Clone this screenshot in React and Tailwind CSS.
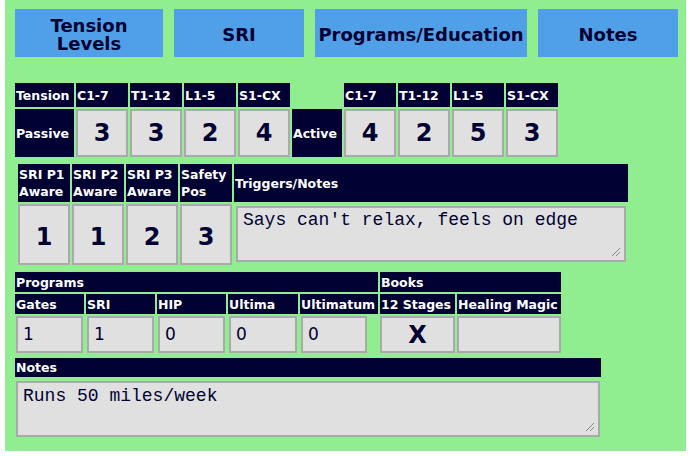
import React from 'react';

const navy = 'bg-[#000033]';

const Head = ({ className = '', children }) => (
  <div className={`${navy} text-white font-bold text-[12.5px] leading-[17px] px-[1px] flex items-center whitespace-nowrap overflow-hidden ${className}`}>
    {children}
  </div>
);

const Val = ({ className = '', children }) => (
  <div className={`bg-[#e0e0e0] border-2 border-[#aaaaaa] text-[#000033] font-bold text-[24px] flex items-center justify-center ${className}`}>
    {children}
  </div>
);

const Field = ({ className = '', children }) => (
  <div className={`bg-[#e0e0e0] border-2 border-[#aaaaaa] text-[#000033] text-[17px] px-[5px] flex items-center ${className}`}>
    {children}
  </div>
);

const Grip = () => (
  <svg className="absolute right-[3px] bottom-[3px]" width="10" height="10" viewBox="0 0 10 10">
    <path d="M9 1L1 9M9 5L5 9" stroke="#888" strokeWidth="1" />
  </svg>
);

const mono = { fontFamily: '"Liberation Mono", "Courier New", monospace' };

const App = () => {
  const tabs = [
    { label: 'Tension Levels', w: 'w-[148px]' },
    { label: 'SRI', w: 'w-[130px]' },
    { label: 'Programs/Education', w: 'w-[212px]' },
    { label: 'Notes', w: 'w-[140px]' },
  ];
  const spine = ['C1-7', 'T1-12', 'L1-5', 'S1-CX'];
  const passive = [3, 3, 2, 4];
  const active = [4, 2, 5, 3];

  return (
    <div className="w-[681px] h-[451px] ml-[5px] bg-[#90ee90] pl-[10px] pt-[9px] text-[#000033]" style={{ fontFamily: '"DejaVu Sans", Verdana, sans-serif' }}>
      {/* Tabs */}
      <div className="flex gap-[11px]">
        {tabs.map((t) => (
          <div key={t.label} className={`${t.w} h-[48px] bg-[#50a0e8] flex items-center justify-center text-center font-bold text-[18px] leading-[18px] px-2 pt-[4px]`}>
            {t.label}
          </div>
        ))}
      </div>

      {/* Tension table */}
      <div className="mt-[26px] flex flex-col gap-[2px]">
        <div className="flex gap-[2px] h-[24px]">
          <Head className="w-[59px]">Tension</Head>
          {spine.map((s) => <Head key={'p' + s} className="w-[52px]">{s}</Head>)}
          <div className="w-[50px]" />
          {spine.map((s) => <Head key={'a' + s} className="w-[52px]">{s}</Head>)}
        </div>
        <div className="flex gap-[2px] h-[48px]">
          <Head className="w-[59px]">Passive</Head>
          {passive.map((v, i) => <Val key={'pv' + i} className="w-[52px]">{v}</Val>)}
          <Head className="w-[50px]">Active</Head>
          {active.map((v, i) => <Val key={'av' + i} className="w-[52px]">{v}</Val>)}
        </div>
      </div>

      {/* SRI table */}
      <div className="mt-[7px] ml-[3px] flex flex-col gap-[2px]">
        <div className="flex gap-[2px] h-[38px]">
          <Head className="w-[52px]">SRI P1<br />Aware</Head>
          <Head className="w-[52px]">SRI P2<br />Aware</Head>
          <Head className="w-[52px]">SRI P3<br />Aware</Head>
          <Head className="w-[52px]">Safety<br />Pos</Head>
          <Head className="w-[394px]">Triggers/Notes</Head>
        </div>
        <div className="flex gap-[2px] h-[61px]">
          {[1, 1, 2, 3].map((v, i) => <Val key={'s' + i} className="w-[52px] pt-[4px]">{v}</Val>)}
          <div className="w-[394px] p-[2px] pb-[3px]">
            <div className="relative h-full bg-[#e0e0e0] border-2 border-[#aaaaaa] px-[5px] pt-[1px] text-[18px] leading-[22px]" style={mono}>
              Says can't relax, feels on edge
              <Grip />
            </div>
          </div>
        </div>
      </div>

      {/* Programs / Books */}
      <div className="mt-[7px] flex flex-col gap-[2px]">
        <div className="flex gap-[2px] h-[20px]">
          <Head className="w-[363px]">Programs</Head>
          <Head className="w-[181px]">Books</Head>
        </div>
        <div className="flex gap-[2px] h-[20px]">
          <Head className="w-[69px]">Gates</Head>
          <Head className="w-[69px]">SRI</Head>
          <Head className="w-[69px]">HIP</Head>
          <Head className="w-[70px]">Ultima</Head>
          <Head className="w-[78px]">Ultimatum</Head>
          <Head className="w-[75px]">12 Stages</Head>
          <Head className="w-[104px]">Healing Magic</Head>
        </div>
        <div className="flex gap-[2px] h-[37px]">
          <div className="w-[69px] px-[1px]"><Field className="h-full">1</Field></div>
          <div className="w-[69px] px-[1px]"><Field className="h-full">1</Field></div>
          <div className="w-[69px] px-[1px]"><Field className="h-full">0</Field></div>
          <div className="w-[70px] px-[1px]"><Field className="h-full">0</Field></div>
          <div className="w-[78px] pl-[1px] pr-[11px]"><Field className="h-full">0</Field></div>
          <Val className="w-[75px]">X</Val>
          <Val className="w-[104px]" />
        </div>
      </div>

      {/* Notes */}
      <div className="mt-[5px] flex flex-col w-[586px]">
        <Head className="h-[19px]">Notes</Head>
        <div className="pt-[4px] px-[1px]">
          <div className="relative h-[56px] bg-[#e0e0e0] border-2 border-[#aaaaaa] px-[5px] pt-[2px] text-[18px] leading-[22px]" style={mono}>
            Runs 50 miles/week
            <Grip />
          </div>
        </div>
      </div>
    </div>
  );
};

export default App;
